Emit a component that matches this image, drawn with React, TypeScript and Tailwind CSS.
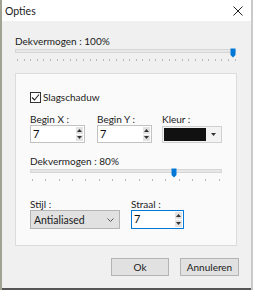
import React from "react";

function Ticks({ count, className }: { count: number; className: string }) {
  return (
    <div className={`flex justify-between ${className}`}>
      {Array.from({ length: count }).map((_, i) => (
        <div key={i} className="w-px h-[2px] bg-[#b8b8b8]" />
      ))}
    </div>
  );
}

function Slider({ pct, className }: { pct: number; className: string }) {
  return (
    <div className={className}>
      <div className="relative h-[10px]">
        <div className="absolute left-0 right-0 top-[1px] h-[4px] bg-[#e7e7e7] border border-[#d6d6d6]" />
        <svg
          className="absolute top-0"
          style={{ left: `calc(${pct}% - ${pct * 0.06}px)` }}
          width="6"
          height="10"
          viewBox="0 0 6 10"
        >
          <path d="M0.5 0.5 H5.5 V7 L3 9.5 L0.5 7 Z" fill="#0078d7" />
        </svg>
      </div>
    </div>
  );
}

function Spin({ value, focused, className }: { value: string; focused?: boolean; className: string }) {
  return (
    <div
      className={`flex h-[18px] bg-white border ${focused ? "border-[#0078d7]" : "border-[#c2c2c2]"} ${className}`}
    >
      <div className="flex-1 pl-[2px] text-[11px] leading-[16px] text-[#111]">{value}</div>
      <div className="flex flex-col w-[7px] my-px mr-px gap-px">
        <div className="flex-1 bg-[#e2e2e2] flex items-center justify-center">
          <svg width="5" height="3" viewBox="0 0 5 3">
            <path d="M0 3 L2.5 0 L5 3 Z" fill="#333" />
          </svg>
        </div>
        <div className="flex-1 bg-[#e2e2e2] flex items-center justify-center">
          <svg width="5" height="3" viewBox="0 0 5 3">
            <path d="M0 0 L5 0 L2.5 3 Z" fill="#333" />
          </svg>
        </div>
      </div>
    </div>
  );
}

export default function App() {
  return (
    <div className="w-[253px] h-[290px] flex flex-col font-['Lato',sans-serif] text-[10px] text-[#1a1a1a] bg-[#f0f0f0] border-l-2 border-[#a3a394] border-r-2 border-r-[#c9c9c9] overflow-hidden">
      <div className="h-[21px] bg-white flex items-center justify-between pl-[3px] pr-[8px] shrink-0">
        <span className="leading-[14px] text-[10.5px]">Opties</span>
        <svg width="10" height="10" viewBox="0 0 10 10">
          <path d="M0.5 0.5 L9.5 9.5 M9.5 0.5 L0.5 9.5" stroke="#222" strokeWidth="1" />
        </svg>
      </div>
      <div className="flex-1 flex flex-col pl-[13px] pt-[13px]">
        <div className="leading-[14px]">Dekvermogen : 100%</div>
        <Slider pct={100} className="w-[221px]" />
        <Ticks count={34} className="w-[219px] ml-[2px] mt-px" />
        <div className="mt-[12px] w-[222px] h-[173px] border border-[#dcdcdc] bg-[#fafafa] pl-[14px] pt-[17px] flex flex-col">
          <div className="flex items-center h-[12px]">
            <div className="w-[11px] h-[11px] border border-[#333] bg-white flex items-center justify-center">
              <svg width="9" height="9" viewBox="0 0 9 9">
                <path d="M1 4.5 L3.5 7 L8 1.5" stroke="#222" strokeWidth="1.1" fill="none" />
              </svg>
            </div>
            <span className="ml-[2px] leading-[12px]">Slagschaduw</span>
          </div>
          <div className="flex mt-[11px]">
            <div className="flex flex-col w-[55px]">
              <div className="h-[11px] leading-[11px]">Begin X :</div>
              <Spin value="7" className="w-[55px]" />
            </div>
            <div className="flex flex-col w-[55px] ml-[12px]">
              <div className="h-[11px] leading-[11px]">Begin Y :</div>
              <Spin value="7" className="w-[55px]" />
            </div>
            <div className="flex flex-col w-[60px] ml-[10px]">
              <div className="h-[11px] leading-[11px]">Kleur :</div>
              <div className="mt-px h-[17px] w-[60px] border border-[#d0d0d0] bg-[#f3f3f3] flex items-center pl-px">
                <div className="w-[42px] h-[13px] bg-[#111]" />
                <div className="flex-1 flex items-center justify-center">
                  <svg width="5" height="3" viewBox="0 0 5 3">
                    <path d="M0 0 L5 0 L2.5 3 Z" fill="#333" />
                  </svg>
                </div>
              </div>
            </div>
          </div>
          <div className="mt-[13px] h-[11px] leading-[11px]">Dekvermogen : 80%</div>
          <Slider pct={76} className="w-[192px] mt-px" />
          <Ticks count={15} className="w-[188px] ml-[2px] mt-px" />
          <div className="flex mt-[18px]">
            <div className="flex flex-col w-[90px]">
              <div className="h-[11px] leading-[11px]">Stijl :</div>
              <div className="h-[19px] w-[90px] bg-[#e1e1e1] border border-[#b4b4b4] flex items-center justify-between pl-[3px] pr-[5px]">
                <span className="leading-[14px] text-[10.5px]">Antialiased</span>
                <svg width="7" height="4" viewBox="0 0 7 4">
                  <path d="M0.5 0.5 L3.5 3.5 L6.5 0.5" stroke="#555" strokeWidth="1" fill="none" />
                </svg>
              </div>
            </div>
            <div className="flex flex-col w-[53px] ml-[11px]">
              <div className="h-[11px] leading-[11px]">Straal :</div>
              <Spin value="7" focused className="w-[53px] h-[19px]" />
            </div>
          </div>
        </div>
        <div className="flex mt-[12px] ml-[96px] gap-[11px]">
          <div className="w-[58px] h-[18px] bg-[#e1e1e1] border border-[#b4b4b4] flex items-center justify-center leading-[14px]">
            Ok
          </div>
          <div className="w-[59px] h-[18px] bg-[#e1e1e1] border border-[#b4b4b4] flex items-center justify-center leading-[14px]">
            Annuleren
          </div>
        </div>
      </div>
      <div className="h-[2px] bg-[#555] shrink-0" />
    </div>
  );
}
